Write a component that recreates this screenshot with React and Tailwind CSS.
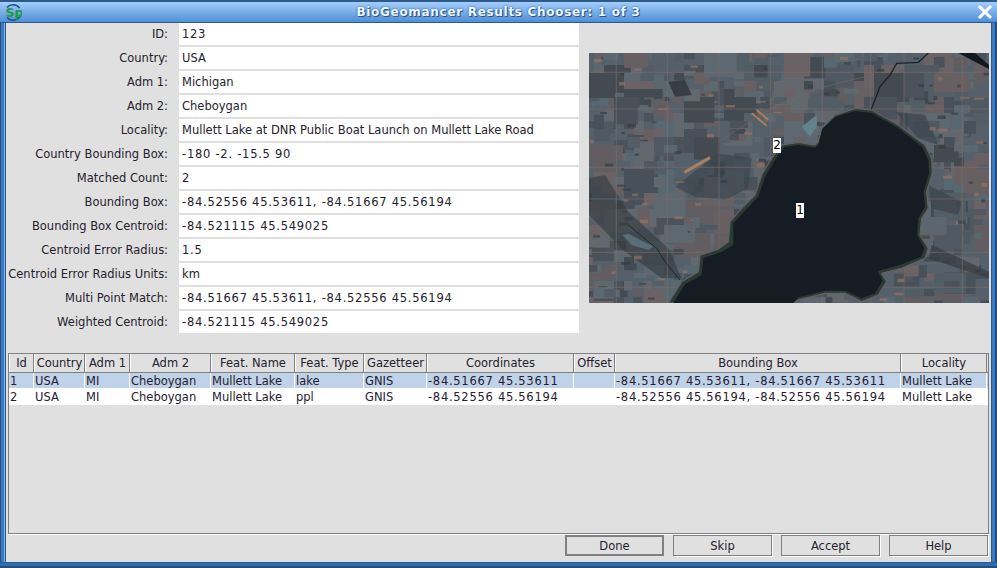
import React from 'react';

const fields = [
  ['ID:', '123'],
  ['Country:', 'USA'],
  ['Adm 1:', 'Michigan'],
  ['Adm 2:', 'Cheboygan'],
  ['Locality:', 'Mullett Lake at DNR Public Boat Launch on Mullett Lake Road'],
  ['Country Bounding Box:', '-180 -2. -15.5 90'],
  ['Matched Count:', '2'],
  ['Bounding Box:', '-84.52556 45.53611, -84.51667 45.56194'],
  ['Bounding Box Centroid:', '-84.521115 45.549025'],
  ['Centroid Error Radius:', '1.5'],
  ['Centroid Error Radius Units:', 'km'],
  ['Multi Point Match:', '-84.51667 45.53611, -84.52556 45.56194'],
  ['Weighted Centroid:', '-84.521115 45.549025'],
];

const columns = [
  { name: 'Id', cls: 'w-[25px]' },
  { name: 'Country', cls: 'w-[51px]' },
  { name: 'Adm 1', cls: 'w-[45px]' },
  { name: 'Adm 2', cls: 'w-[81px]' },
  { name: 'Feat. Name', cls: 'w-[84px]' },
  { name: 'Feat. Type', cls: 'w-[69px]' },
  { name: 'Gazetteer', cls: 'w-[63px]' },
  { name: 'Coordinates', cls: 'w-[147px]' },
  { name: 'Offset', cls: 'w-[41px]' },
  { name: 'Bounding Box', cls: 'w-[286px]' },
  { name: 'Locality', cls: 'w-[86px]' },
];

const rows = [
  ['1', 'USA', 'MI', 'Cheboygan', 'Mullett Lake', 'lake', 'GNIS', '-84.51667 45.53611', '', '-84.51667 45.53611, -84.51667 45.53611', 'Mullett Lake'],
  ['2', 'USA', 'MI', 'Cheboygan', 'Mullett Lake', 'ppl', 'GNIS', '-84.52556 45.56194', '', '-84.52556 45.56194, -84.52556 45.56194', 'Mullett Lake'],
];

// digits sit wider in the original font than in DejaVu
const isNumeric = (text) => /^[-\d., ]+$/.test(text);

// seeded so the farmland comes out the same every run
let seed = 41;
const rnd = () => {
  seed = (seed * 16807) % 2147483647;
  return (seed - 1) / 2147483646;
};

const palette = ['#56606a', '#5c666e', '#505862', '#62686e', '#625d60', '#6a6264', '#535d65', '#485059', '#586872', '#5e6870', '#675f61', '#4b525b', '#434a52'];
const roadsX = [92, 245, 400, 555, 710, 855, 955, 1130];
const roadsY = [80, 190, 365, 460, 620, 725];

const patches = [];
for (let i = 0; i < 1100; i++) {
  const big = rnd() < 0.25;
  patches.push({
    x: 12 + Math.floor(rnd() * 40) * 30 - 15,
    y: 24 + Math.floor(rnd() * 32) * 24 - 12,
    w: big ? 60 + rnd() * 50 : 20 + rnd() * 30,
    h: big ? 50 + rnd() * 40 : 14 + rnd() * 26,
    fill: palette[Math.floor(rnd() * palette.length)],
  });
}
const specks = [];
for (let i = 0; i < 130; i++) {
  specks.push({
    x: 12 + rnd() * 1190,
    y: 24 + rnd() * 740,
    w: 8 + rnd() * 22,
    h: 4 + rnd() * 8,
    fill: rnd() < 0.55 ? '#947464' : '#363c42',
  });
}

const lakeOuter =
  'M250 774 L290 710 L340 680 L345 630 L400 612 L430 590 L435 530 L470 490 L510 450 L530 390 L560 340 L590 300 L640 292 L690 300 L700 290 L710 250 L750 210 L810 190 L860 195 L940 240 L1020 300 L1040 340 L1042 385 L1025 440 L1030 490 L1010 520 L1005 570 L1030 610 L1020 640 L950 670 L890 685 L905 710 L880 750 L830 770 L780 745 L720 745 L640 765 L625 774 Z';
const lakeInner =
  'M700 300 L712 252 L752 216 L810 198 L860 204 L938 248 L1012 306 L1030 345 L1032 385 L1016 440 L1020 485 L1000 520 L996 570 L1018 610 L1008 635 L945 660 L878 678 L893 708 L870 745 L830 760 L780 737 L720 737 L640 757 L625 774 L265 774 L300 718 L350 690 L355 640 L410 620 L445 600 L445 535 L480 497 L520 455 L540 395 L570 345 L598 306 L640 300 L690 308 Z';

function SatelliteMap() {
  return (
    <svg viewBox="12 24 1200 750" className="block w-[400px] h-[250px]">
      <rect x="12" y="24" width="1200" height="750" fill="#56606a" />
      <g style={{ filter: 'blur(1.2px)' }}>
        {patches.map((p, i) => (
          <rect key={i} x={p.x} y={p.y} width={p.w} height={p.h} fill={p.fill} />
        ))}
        <path d="M12 400 L60 390 L130 500 L250 610 L290 700 L230 700 L120 620 L12 510 Z" fill="#343b40" opacity="0.6" />
        <path d="M270 425 L400 325 L500 340 L490 430 L420 465 L330 455 Z" fill="#3a444b" opacity="0.65" />
        <path d="M250 110 L300 105 L320 150 L270 155 Z" fill="#363d44" />
        <path d="M930 200 L1020 210 L1060 300 L1000 280 Z" fill="#3a444c" opacity="0.65" />
        <path d="M1030 420 L1130 470 L1120 510 L1040 490 Z" fill="#3c464e" opacity="0.75" />
        <path d="M1040 600 L1212 680 L1212 700 L1030 640 Z" fill="#33393e" opacity="0.65" />
        {specks.map((p, i) => (
          <rect key={i} x={p.x} y={p.y} width={p.w} height={p.h} fill={p.fill} opacity="0.7" />
        ))}
        {roadsX.map((x) => (
          <rect key={x} x={x} y="24" width="4" height="750" fill="#7b6c6c" opacity="0.5" />
        ))}
        {roadsY.map((y) => (
          <rect key={y} x="12" y={y} width="1200" height="4" fill="#7b6c6c" opacity="0.5" />
        ))}
        <path d="M298 382 L375 338" stroke="#a9805f" strokeWidth="9" fill="none" />
        <path d="M500 205 L545 242 M515 195 L550 225" stroke="#a9805f" strokeWidth="6" fill="none" />
        <path d="M400 290 L560 190 L700 130 L860 90" stroke="#75696c" strokeWidth="3" fill="none" opacity="0.6" />
        <path d="M650 245 L695 210 L695 245 L675 275 Z" fill="#64828a" />
        <path d="M112 570 L130 566 L205 605 L190 615 L140 600 Z" fill="#596e78" />
      </g>
      <path d="M858 195 L885 125 L915 90 L935 55 L1000 52 L1030 24" stroke="#1c2228" strokeWidth="4" fill="none" />
      <path d="M1120 24 L1160 45 L1212 72 L1212 60 L1170 24 Z" fill="#12181e" />
      <path d="M130 540 L215 610 L240 650 L285 705" stroke="#22282c" strokeWidth="3" fill="none" />
      <g style={{ filter: 'blur(0.8px)' }}>
        <path d={lakeOuter} fill="#2c3a33" stroke="#5f6266" strokeWidth="4" strokeLinejoin="round" />
        <path d={lakeInner} fill="#161c24" strokeLinejoin="round" />
      </g>
    </svg>
  );
}

function MapMarker({ label, className }) {
  return (
    <span className={`absolute w-2 h-[15px] bg-white text-black text-[12px] leading-[15px] text-center ${className}`}>
      {label}
    </span>
  );
}

function FieldRow({ label, value }) {
  return (
    <div className="flex h-[22px]">
      <div className="w-[162px] text-right leading-[23px] whitespace-nowrap">{label}</div>
      <div className={`ml-[11px] w-[400px] h-full bg-white pl-[3px] leading-[22px] whitespace-nowrap ${isNumeric(value) ? 'tracking-[0.74px]' : ''}`}>
        {value}
      </div>
    </div>
  );
}

function WindowButton({ label, isDefault = false }) {
  return (
    <button
      className={`w-[99px] h-[21px] pt-[2px] text-center leading-none bg-[#e0e0e0] ${
        isDefault
          ? 'border-2 border-[#808080]'
          : 'border border-[#808080] shadow-[1px_1px_0_#ffffff]'
      }`}
    >
      {label}
    </button>
  );
}

export default function App() {
  return (
    <div className="w-[997px] h-[568px] overflow-hidden flex flex-col bg-[#2a4d75] font-['DejaVu_Sans',sans-serif] text-[11.5px] text-[#25202e]">
      <div className="h-[23px] shrink-0 flex items-center border-t-2 border-t-[#2c5a8a] border-b border-b-[#2c5a8a] bg-gradient-to-b from-[#a3cdfb] to-[#4f8fd6]">
        <div className="w-[30px] pl-[4px] flex">
          <svg viewBox="0 0 18 18" className="w-[18px] h-[18px]">
            <path d="M3 4.5 A8 8 0 0 1 15.5 5" stroke="#1f4f86" strokeWidth="1.6" fill="none" />
            <path d="M16.5 12 A8 8 0 0 1 3 14.5" stroke="#1f4f86" strokeWidth="1.6" fill="none" />
            <text x="1.5" y="13.5" fontSize="12.5" fontWeight="700" fill="#1f9a45">Sp</text>
          </svg>
        </div>
        <div className="flex-1 text-center text-[12px] font-bold text-[#eef6ff] tracking-[0.7px] [text-shadow:0_0_2px_#1f4f86,1px_1px_0_#2c5a8a]">
          BioGeomancer Results Chooser: 1 of 3
        </div>
        <div className="w-[30px] flex justify-end pr-[4px]">
          <svg viewBox="0 0 16 16" className="w-[16px] h-[16px]">
            <path d="M2 2 L14 14 M14 2 L2 14" stroke="#ffffff" strokeWidth="3" />
          </svg>
        </div>
      </div>

      <div className="flex-1 min-h-0 flex">
        <div className="w-[6px] shrink-0 flex">
          <div className="w-[1px] bg-[#2a4d75]" />
          <div className="w-[3px] bg-[#3a7ac8]" />
          <div className="w-[1px] bg-[#80b0e8]" />
          <div className="w-[1px] bg-[#2c5a8a]" />
        </div>
        <div className="flex-1 min-w-0 bg-[#e0e0e0] flex flex-col">
          <div className="flex">
            <div className="flex flex-col gap-[2px]">
              {fields.map(([label, value]) => (
                <FieldRow key={label} label={label} value={value} />
              ))}
            </div>
            <div className="relative ml-[10px] mt-[30px] w-[400px] h-[250px]">
              <SatelliteMap />
              <MapMarker label="2" className="left-[184px] top-[85px]" />
              <MapMarker label="1" className="left-[207px] top-[150px]" />
            </div>
          </div>

          <div className="mt-[20px] ml-[2px] w-[981px] h-[181px] border border-[#808080] shadow-[0_1px_0_#ffffff]">
            <div className="flex h-[19px] border-b border-[#808080]">
              {columns.map((col) => (
                <div
                  key={col.name}
                  className={`${col.cls} shrink-0 text-center leading-[19px] whitespace-nowrap overflow-hidden border-l border-l-white border-r border-r-[#808080]`}
                >
                  {col.name}
                </div>
              ))}
            </div>
            {rows.map((row, r) => (
              <div key={r} className={`flex h-[16px] ${r === 0 ? 'bg-[#c0d2e8]' : 'bg-white'}`}>
                {row.map((cell, c) => (
                  <div
                    key={c}
                    className={`${columns[c].cls} shrink-0 pl-[1px] leading-[16px] whitespace-nowrap overflow-hidden border-r border-white border-b ${isNumeric(cell) ? 'tracking-[0.72px]' : ''}`}
                  >
                    {cell}
                  </div>
                ))}
              </div>
            ))}
          </div>

          <div className="mt-[1px] flex justify-end gap-[9px] pr-[3px]">
            {['Done', 'Skip', 'Accept', 'Help'].map((label) => (
              <WindowButton key={label} label={label} isDefault={label === 'Done'} />
            ))}
          </div>
          <div className="flex-1" />
        </div>
        <div className="w-[6px] shrink-0 flex">
          <div className="w-[1px] bg-[#2c5a8a]" />
          <div className="w-[3px] bg-[#3a7ac8]" />
          <div className="w-[2px] bg-[#2a4d75]" />
        </div>
      </div>

      <div className="h-[6px] shrink-0 flex flex-col">
        <div className="h-[1px] bg-[#2c5a8a]" />
        <div className="h-[3px] bg-[#2f6db5]" />
        <div className="h-[2px] bg-[#2a4d75]" />
      </div>
    </div>
  );
}
